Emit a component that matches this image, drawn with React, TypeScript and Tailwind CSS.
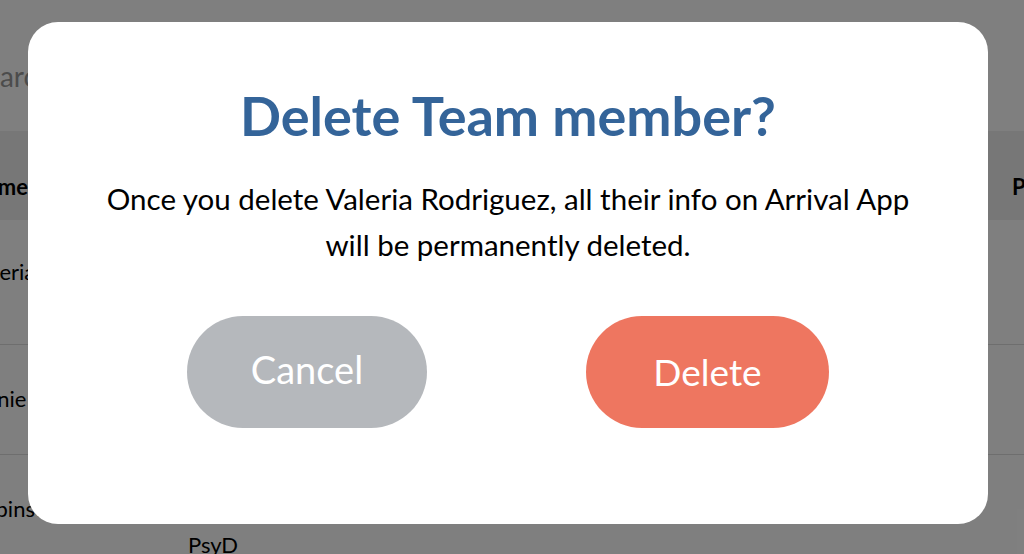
import { useState } from "react"

const members = [
  { name: "Valeria Rodriguez", role: "Clinical Psychologist", h: "h-[125px]", pt: "pt-[34px]" },
  { name: "Annie Walsh", role: "Therapist", h: "h-[110px]", pt: "pt-[36px]" },
  { name: "Robinson", role: "Clinical Psychologist,", extra: "PsyD", h: "h-[110px]", pt: "pt-[36px]" },
]

function TeamTable() {
  return (
    <div className="-ml-[30px] w-[1200px]">
      <div className="h-[131px] pt-[56px]">
        <div className="text-[28px] leading-[40px] text-[#999999]">Search</div>
      </div>
      <div className="flex h-[89px] items-start bg-[#eeeeee] pt-[40px] text-[22px] font-bold leading-[32px] text-black">
        <div className="w-[218px] shrink-0">Name</div>
        <div className="w-[824px] shrink-0">Title</div>
        <div>Phone</div>
      </div>
      {members.map((m) => (
        <div
          key={m.name}
          className={`flex items-start border-b border-[#dddddd] ${m.h} ${m.pt} text-[22px] leading-[36px] text-black`}
        >
          <div className="w-[218px] shrink-0 whitespace-nowrap">{m.name}</div>
          <div className="w-[824px] shrink-0">
            <div>{m.role}</div>
            {m.extra && <div>{m.extra}</div>}
          </div>
        </div>
      ))}
    </div>
  )
}

export default function App() {
  const [open, setOpen] = useState(true)

  return (
    <div className="relative h-[554px] w-[1024px] overflow-hidden bg-white font-['Lato',sans-serif]">
      <TeamTable />

      {open && (
        <div className="absolute inset-0 bg-black/50 pl-[28px] pt-[22px]">
          <div className="flex h-[502px] w-[960px] flex-col items-center rounded-[30px] bg-white pt-[66px]">
            <h2 className="text-[54px] font-bold leading-[56px] text-[#346499]">Delete Team member?</h2>
            <p className="mt-[32px] text-center text-[29.5px] leading-[46px] text-black">
              Once you delete Valeria Rodriguez, all their info on Arrival App
              <br />
              will be permanently deleted.
            </p>
            <div className="mt-[48px] flex gap-[159px]">
              <button
                onClick={() => setOpen(false)}
                className="h-[112px] w-[240px] rounded-full bg-[#b5b8bc] pb-[6px] text-[38px] text-white"
              >
                Cancel
              </button>
              <button
                onClick={() => setOpen(false)}
                className="h-[112px] w-[243px] rounded-full bg-[#ee7660] text-[37px] text-white"
              >
                Delete
              </button>
            </div>
          </div>
        </div>
      )}
    </div>
  )
}
